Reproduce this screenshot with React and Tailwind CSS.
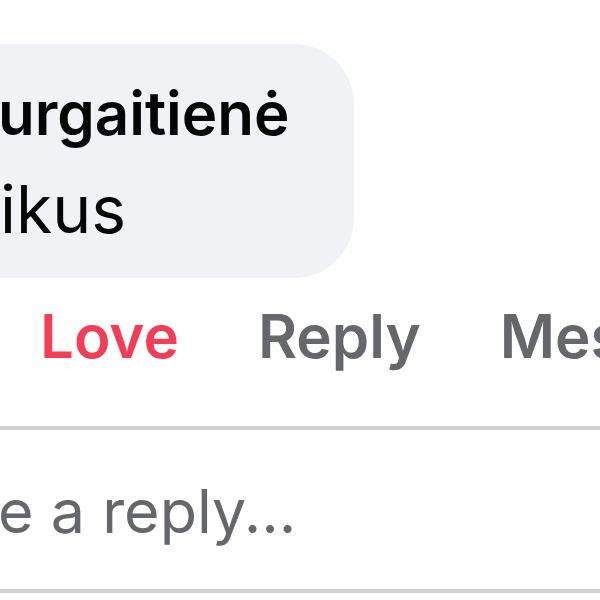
export default function App() {
  return (
    <div
      className="w-[600px] h-[600px] overflow-hidden bg-white"
      style={{ fontFamily: "Inter, 'Noto Sans', sans-serif" }}
    >
      <div className="pt-[44px]">
        <div className="-ml-[60px] pl-[60px] pr-[65px] w-fit bg-[#f0f2f5] rounded-[60px] pt-[33px] pb-[29px]">
          <div className="text-[60px] leading-[72px] font-semibold text-[#050505] whitespace-nowrap -ml-[2px]">
            urgaitienė
          </div>
          <div className="mt-[20px] text-[66px] leading-[80px] text-[#050505] whitespace-nowrap">
            ikus
          </div>
        </div>
        <div className="mt-[22px] pl-[40px] flex gap-[79px] text-[60px] leading-[72px] font-semibold whitespace-nowrap">
          <span className="text-[#f33e58]">Love</span>
          <span className="text-[#65676b]">Reply</span>
          <span className="text-[#65676b]">Message</span>
        </div>
        <div className="mt-[54px] border-y-[4px] border-[#ced0d4] pt-[41px] pb-[38px]">
          <div className="text-[61px] leading-[80px] text-[#65676b] whitespace-nowrap -ml-[2px]">
            e a reply...
          </div>
        </div>
      </div>
    </div>
  );
}
